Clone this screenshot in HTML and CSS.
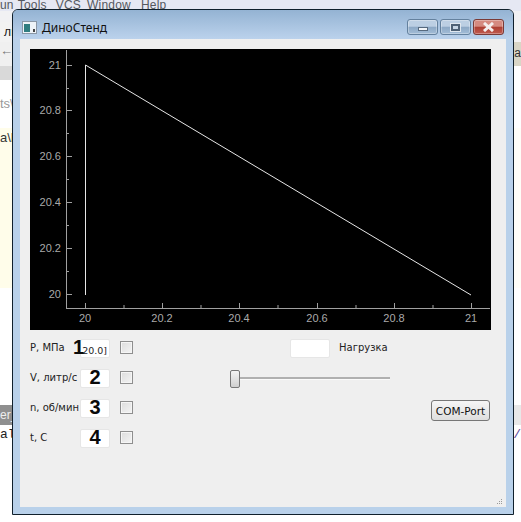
FILE: index.html
```html
<!DOCTYPE html>
<html lang="en">
<head>
  <meta charset="UTF-8">
  <meta name="viewport" content="width=device-width, initial-scale=1.0">
  <title>ДиноСтенд</title>
  <link rel="stylesheet" href="styles.css">
</head>
<body>
  <div class="desktop">
    <!-- IDE behind the window, only its edges are visible -->
    <div class="ide">
      <div class="menu-bar">
        <span class="menu-run">un</span>
        <span>Tools</span>
        <span>VCS</span>
        <span class="menu-window">Window</span>
        <span>Help</span>
      </div>
      <div class="band band-top"></div>
      <div class="band band-tab"><span>лı</span></div>
      <div class="band band-tools"><span>←</span><span class="tab-right">ка</span></div>
      <div class="band band-grey"></div>
      <div class="band band-path"><span>ts\</span></div>
      <div class="band band-code"><span>a\L</span></div>
      <div class="band band-blank"></div>
      <div class="band band-file"><span>er_</span></div>
      <div class="band band-src"><span>al'</span><span class="slash">/</span></div>
    </div>

    <div class="window">
      <div class="titlebar">
        <svg class="app-icon" width="15" height="13" viewBox="0 0 15 13">
          <rect x="0.5" y="0.5" width="14" height="12" fill="#eef3f8" stroke="#8a97a6"/>
          <rect x="2" y="3" width="6" height="8" fill="#2f7d80"/>
          <rect x="11" y="8" width="2" height="3" fill="#444"/>
        </svg>
        <span class="title">ДиноСтенд</span>
        <div class="caption">
          <div class="cap-btn"><span class="cap-min"></span></div>
          <div class="cap-btn"><span class="cap-max"></span></div>
          <div class="cap-btn cap-close">
            <svg width="15" height="10" viewBox="0 0 15 10">
              <path d="M3 1 L12 9 M12 1 L3 9" stroke="#f4eeee" stroke-width="3"/>
            </svg>
          </div>
        </div>
      </div>

      <div class="client">
        <svg class="plot" width="461" height="281" viewBox="0 0 461 281">
          <rect width="461" height="281" fill="#000"/>
          <g stroke="#a0a0a0" fill="none">
            <path d="M36.5 1 V260 M36 259.5 H460"/>
            <path d="M36 16.5 h6 M36 61.5 h6 M36 107.5 h6 M36 153.5 h6 M36 199.5 h6 M36 245.5 h6"/>
            <path d="M36 39.5 h3 M36 84.5 h3 M36 130.5 h3 M36 176.5 h3 M36 222.5 h3"/>
            <path d="M55.5 259 v-5 M132.5 259 v-5 M209.5 259 v-5 M287.5 259 v-5 M364.5 259 v-5 M441.5 259 v-5"/>
            <path d="M94 259 v-3 M171 259 v-3 M248 259 v-3 M326 259 v-3 M403 259 v-3"/>
          </g>
          <path class="curve" d="M55.5 246 V16 L441 246"/>
          <g class="axis-y">
            <text x="31" y="20">21</text>
            <text x="31" y="65">20.8</text>
            <text x="31" y="111">20.6</text>
            <text x="31" y="157">20.4</text>
            <text x="31" y="203">20.2</text>
            <text x="31" y="249">20</text>
          </g>
          <g class="axis-x">
            <text x="55" y="273">20</text>
            <text x="132" y="273">20.2</text>
            <text x="209" y="273">20.4</text>
            <text x="287" y="273">20.6</text>
            <text x="364" y="273">20.8</text>
            <text x="441" y="273">21</text>
          </g>
        </svg>

        <div class="panel">
          <div class="fields">
            <span class="label">P, МПа</span>
            <div class="field field-first">20.0]<b class="mark mark-first">1</b></div>
            <span class="check"></span>

            <span class="label">V, литр/с</span>
            <div class="field"><b class="mark">2</b></div>
            <span class="check"></span>

            <span class="label">n, об/мин</span>
            <div class="field"><b class="mark">3</b></div>
            <span class="check"></span>

            <span class="label">t, C</span>
            <div class="field"><b class="mark">4</b></div>
            <span class="check"></span>
          </div>

          <div class="load">
            <div class="load-row">
              <div class="field field-wide"></div>
              <span class="label">Нагрузка</span>
            </div>
            <div class="slider">
              <span class="slider-handle"></span>
              <span class="slider-track"></span>
            </div>
          </div>

          <button class="port-btn">COM-Port</button>
        </div>

        <svg class="grip" width="7" height="7" viewBox="0 0 7 7">
          <path d="M5 0h1v1H5z M3 2h1v1H3z M5 2h1v1H5z M1 4h1v1H1z M3 4h1v1H3z M5 4h1v1H5z" fill="#9a9a9a"/>
        </svg>
      </div>
    </div>
  </div>
</body>
</html>
```

FILE: styles.css
```css
body {
  margin: 0;
  padding: 0;
  font-family: "DejaVu Sans", sans-serif;
  background-color: #fff;
}

.desktop {
  position: relative;
  width: 521px;
  height: 522px;
  overflow: hidden;
}

/* background IDE */
.ide {
  display: flex;
  flex-direction: column;
  height: 100%;
}

.menu-bar {
  display: flex;
  gap: 9px;
  height: 11px;
  background-color: #e6e8f3;
  color: #55595f;
  font-family: "Liberation Sans", sans-serif;
  font-size: 12px;
  line-height: 10px;
  letter-spacing: 0.2px;
  white-space: nowrap;
}

.menu-run { margin-right: -5px; }
.menu-window { margin: 0 1px 0 -3px; }

.band {
  display: flex;
  justify-content: space-between;
  font-family: "Liberation Sans", sans-serif;
  font-size: 13px;
  color: #333;
}

.band-top { height: 11px; background-color: #f1f1f3; }
.band-tab { height: 20px; background-color: #f2f2f2; line-height: 20px; color: #111; font-size: 12px; padding-left: 4px; }
.band-tools { height: 24px; background: linear-gradient(to right, #f0f0f0 500px, #d9d6c6 500px); line-height: 18px; color: #777; }
.tab-right { color: #333; font-size: 12px; line-height: 22px; }
.band-grey { height: 14px; background: linear-gradient(to right, #d9d9d9 500px, #fff 500px); }
.band-path { height: 48px; background-color: #fff; padding-top: 16px; box-sizing: border-box; color: #999; }
.band-code { height: 160px; background: linear-gradient(to right, #fffdea 500px, #fffef8 500px); line-height: 20px; }
.band-blank { flex: none; height: 117px; background-color: #fff; }
.band-file { height: 20px; background: linear-gradient(to right, #8f8f8f 14px, #e8e8e8 14px); color: #eee; font-size: 12px; line-height: 20px; }
.band-src { flex: 1; background-color: #fff; font-family: "Liberation Mono", monospace; font-size: 13px; color: #222; line-height: 20px; }
.slash { color: #5b4a9c; }

/* the window */
.window {
  position: absolute;
  top: 9px;
  left: 12px;
  width: 502px;
  height: 506px;
  box-sizing: border-box;
  display: flex;
  flex-direction: column;
  border: 1px solid #10202c;
  border-radius: 6px 6px 0 0;
  background-color: #b9d1ea;
}

.titlebar {
  display: flex;
  align-items: center;
  flex: none;
  height: 29px;
  box-sizing: border-box;
  padding: 5px 9px 0 9px;
  border-radius: 5px 5px 0 0;
  background: linear-gradient(#94b3d3, #bbd2ec);
}

.app-icon { flex: none; }

.title {
  margin-left: 5px;
  font-family: "Noto Sans", sans-serif;
  font-size: 12px;
  color: #111;
}

.caption {
  display: flex;
  gap: 2px;
  margin-left: auto;
}

.cap-btn {
  display: flex;
  align-items: center;
  justify-content: center;
  width: 31px;
  height: 16px;
  box-sizing: border-box;
  border: 1px solid #64819e;
  border-radius: 3px;
  background: linear-gradient(#bccfe3 45%, #8ca8c5 50%, #a3bdd7);
  box-shadow: inset 0 0 0 1px rgba(255, 255, 255, 0.3);
}

.cap-min {
  width: 10px;
  height: 4px;
  margin-top: 3px;
  box-sizing: border-box;
  border: 1px solid #56697e;
  background-color: #f2f5f8;
}

.cap-max {
  width: 9px;
  height: 7px;
  box-sizing: border-box;
  border: 2px solid #4e6175;
  outline: 1px solid #dfe7ef;
  background-color: #c6d5e4;
}

.cap-close {
  border-color: #7a3a36;
  background: linear-gradient(#d58a80 45%, #ad3e32 50%, #c05a4e);
}

.client {
  position: relative;
  flex: 1;
  margin: 0 7px 7px 7px;
  padding: 10px 15px 0 10px;
  background-color: #efefef;
  font-size: 10px;
  color: #222;
}

.plot {
  display: block;
  font-family: "Liberation Sans", sans-serif;
  font-size: 11px;
}

.plot text { fill: #aaa; }
.axis-y text { text-anchor: end; }
.axis-x text { text-anchor: middle; }

.curve {
  fill: none;
  stroke: #e6e6e6;
  stroke-width: 1;
}

.panel {
  display: flex;
  align-items: flex-start;
  margin-top: 9px;
}

.fields {
  display: grid;
  grid-template-columns: 50px 30px 23px;
  grid-auto-rows: 19px;
  row-gap: 11px;
  align-items: center;
}

.label { white-space: nowrap; position: relative; top: -1px; }

.field {
  position: relative;
  display: flex;
  align-items: center;
  justify-content: center;
  height: 19px;
  box-sizing: border-box;
  background-color: #fff;
  border: 1px solid #e6e6e6;
  border-radius: 2px;
}

.field-first {
  justify-content: flex-end;
  padding: 3px 2px 0 0;
  font-size: 9.5px;
}

.field-wide { width: 40px; }

.mark {
  font-family: "Liberation Sans", sans-serif;
  font-size: 20px;
  color: #0a0a0a;
  position: relative;
  top: -1px;
}

.mark-first {
  position: absolute;
  top: -4px;
  left: -8px;
}

.check {
  width: 13px;
  height: 13px;
  box-sizing: border-box;
  margin: 0 0 2px 10px;
  border: 1px solid #8e8e8e;
  background: linear-gradient(135deg, #dcdcdc, #f4f4f4);
  box-shadow: inset 0 0 0 1px #f5f5f5;
}

.load {
  display: flex;
  flex-direction: column;
  width: 160px;
  margin-left: 97px;
}

.load-row {
  display: flex;
  align-items: center;
  gap: 9px;
  margin-left: 60px;
}

.slider {
  display: flex;
  align-items: center;
  height: 19px;
  margin-top: 11px;
}

.slider-handle {
  flex: none;
  width: 10px;
  height: 18px;
  box-sizing: border-box;
  border: 1px solid #777;
  border-radius: 2px;
  background: linear-gradient(#f4f4f4, #cfcfcf);
}

.slider-track {
  flex: 1;
  height: 2px;
  background-color: #b0b0b0;
  border-bottom: 1px solid #fafafa;
}

.port-btn {
  width: 59px;
  height: 21px;
  margin: 61px 0 0 41px;
  padding: 0;
  border: 1px solid #777;
  border-radius: 3px;
  background: linear-gradient(#f6f6f6, #dedede);
  font-family: "DejaVu Sans", sans-serif;
  font-size: 10.5px;
  color: #111;
  white-space: nowrap;
}

.grip {
  position: absolute;
  right: 3px;
  bottom: 1px;
}
```
